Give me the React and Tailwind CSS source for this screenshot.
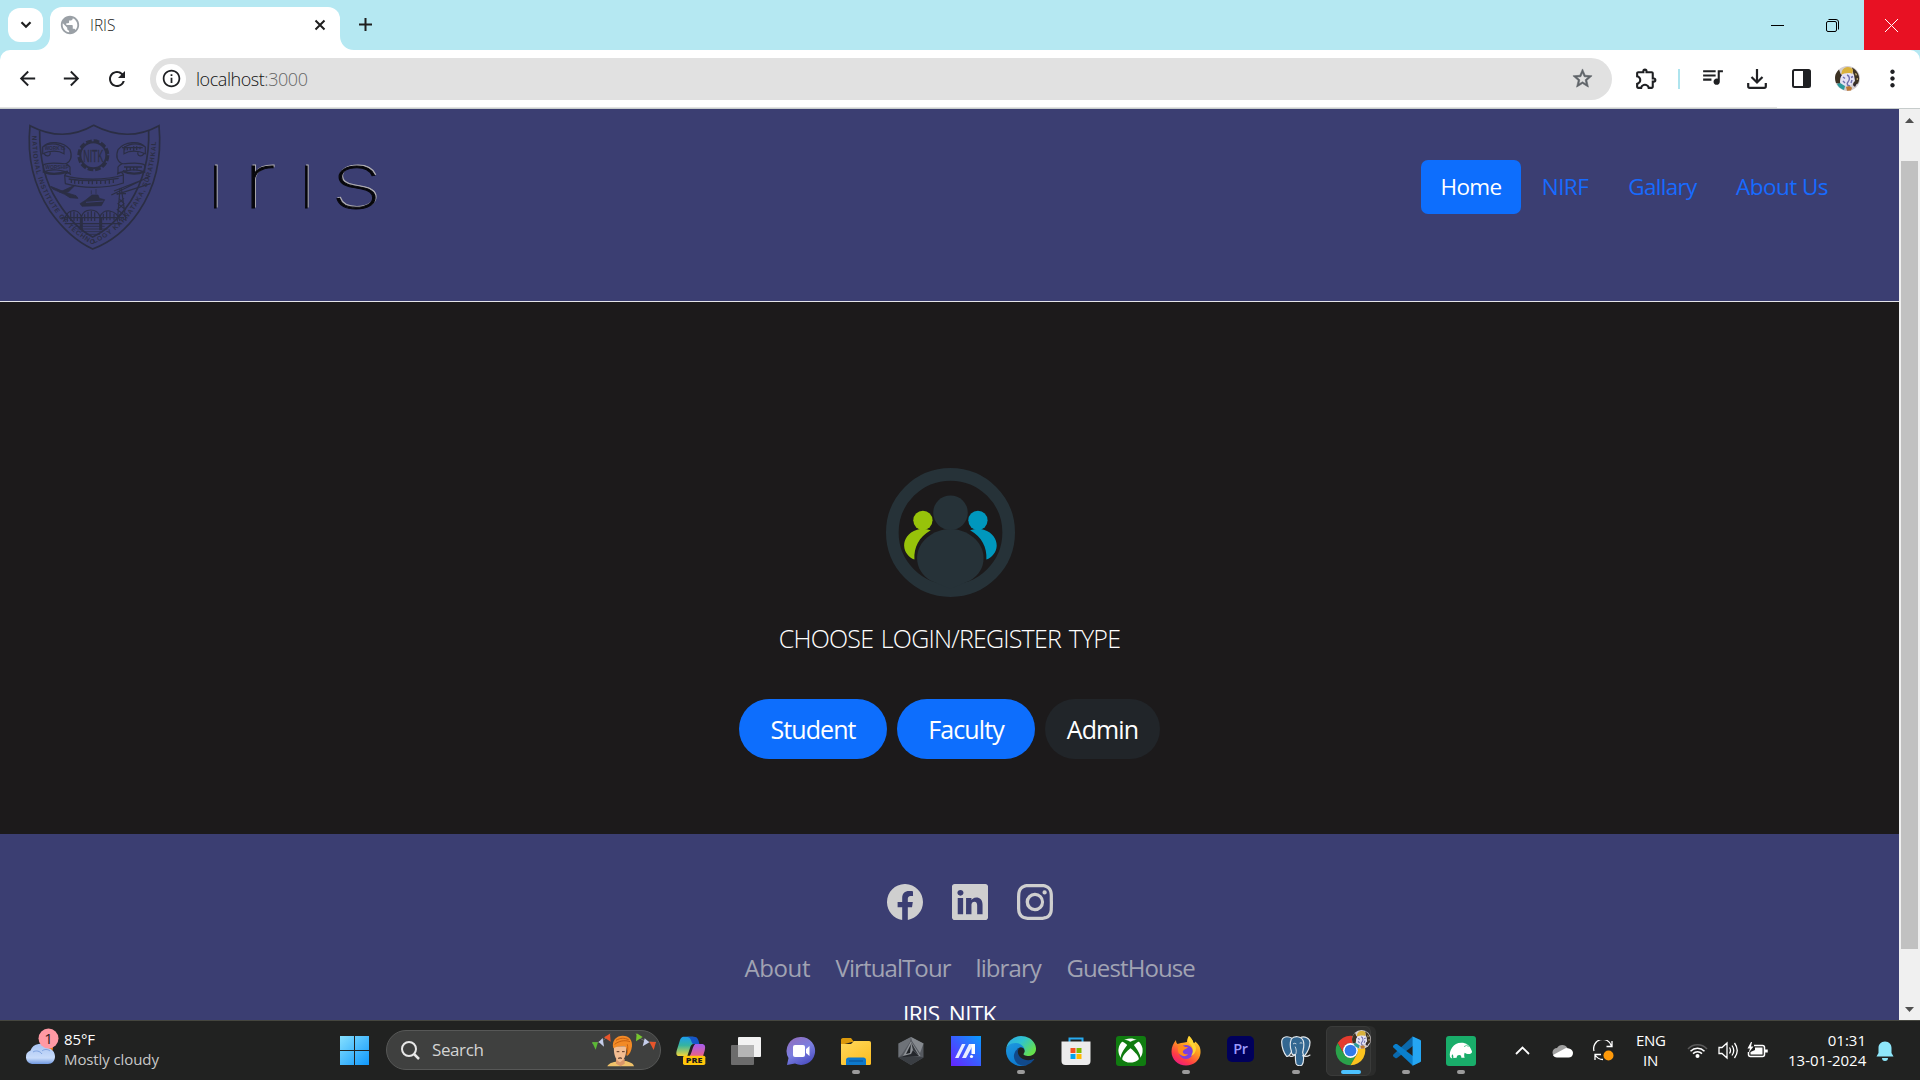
import React from "react";
import {
  MdArrowBack,
  MdArrowForward,
  MdRefresh,
  MdInfoOutline,
  MdStarOutline,
  MdOutlineExtension,
  MdQueueMusic,
  MdMoreVert,
  MdPublic,
} from "react-icons/md";
import { BsFacebook, BsLinkedin, BsInstagram } from "react-icons/bs";
import { FaXbox } from "react-icons/fa";

/* ---------- Browser chrome ---------- */

function TabStrip() {
  return (
    <div className="flex h-[50px] shrink-0 bg-[#b5e8f2] text-[#1f1f1f]">
      <button className="mt-2 ml-2 flex h-[34px] w-[35px] items-center justify-center rounded-xl bg-white">
        <svg width="12" height="8" viewBox="0 0 12 8" fill="none" stroke="currentColor" strokeWidth="2.2">
          <path d="M1.5 1.2 6 5.8l4.500-4.600" />
        </svg>
      </button>
      <div className="relative mt-[7px] ml-[7px] flex h-[43px] w-[290px] items-center rounded-t-xl bg-white">
        <svg className="absolute bottom-0 -left-[14px]" width="14" height="14" viewBox="0 0 14 14">
          <path d="M14 0v14H0C8 14 14 8 14 0z" fill="#fff" />
        </svg>
        <svg className="absolute -right-[14px] bottom-0" width="14" height="14" viewBox="0 0 14 14">
          <path d="M0 0v14h14C6 14 0 8 0 0z" fill="#fff" />
        </svg>
        <MdPublic className="-mt-[7px] ml-[9px] size-[22px] text-[#9aa0a6]" />
        <span className="-mt-[7px] ml-[9px] text-[15.500px] leading-5 font-light">IRIS</span>
        <svg className="-mt-[7px] mr-[14px] ml-auto" width="12" height="12" viewBox="0 0 12 12" stroke="currentColor" strokeWidth="2">
          <path d="m1.500 1.500 9 9M10.500 1.500l-9 9" />
        </svg>
      </div>
      <svg className="mt-[18px] ml-[19px]" width="13" height="13" viewBox="0 0 13 13" stroke="currentColor" strokeWidth="2">
        <path d="M6.500 0v13M0 6.500h13" />
      </svg>
      <div className="ml-auto flex">
        <div className="flex w-[57px] items-center justify-center">
          <svg width="13" height="1" viewBox="0 0 13 1"><path d="M0 0h13v1H0z" fill="#000" /></svg>
        </div>
        <div className="flex w-[58px] items-center pl-[20px]">
          <svg width="13" height="13" viewBox="0 0 13 13" fill="none" stroke="#000">
            <rect x=".5" y="2.500" width="10" height="10" rx="1.500" />
            <path d="M2.500 .5H10A2.500 2.500 0 0 1 12.500 3v7.500" />
          </svg>
        </div>
        <div className="flex w-14 items-center bg-[#e81123] pl-[21px]">
          <svg width="13" height="13" viewBox="0 0 13 13" stroke="#fff"><path d="m0 0 13 13M13 0 0 13" /></svg>
        </div>
      </div>
    </div>
  );
}

function GaneshaAvatar({ className }) {
  return (
    <svg className={className} viewBox="0 0 25 25">
      <circle cx="12.500" cy="12.500" r="12.500" fill="#d3cdd0" />
      <path d="M4 3.500A12.500 12.500 0 0 0 1 17l4 1 1-9zM17 1.500c6 3 9 10 6 16l-5 2 1-9z" fill="#3d3223" />
      <path d="M7 5c2-5 9-5 11-1l-1 5-5 1-6-1z" fill="#d9b13c" />
      <path d="M6 9c3-2 10-3 13 0l1 6-4 4-8 1-3-4z" fill="#e4e2f4" />
      <path d="M12 9c3 1 3 5 1 7s0 4 2 4M8 11l2 1.500M16 11.500l2-1M8 15l2 2M17 14l-1 3" stroke="#6f6fac" strokeWidth="1.400" fill="none" />
      <path d="M2 18c1 3 4 5 7 6l1-4-5-3z" fill="#2c9a9c" />
      <path d="M11 21c2-1 5-1 6 1l-1 2.500-4 .2z" fill="#bd7934" />
      <path d="M18 19l4-2-2 4zM5 8l2 1-2 3z" fill="#2a2230" />
      <path d="M20 7l2 1-1 2zM21 13l2-1v2zM3 10l1 2" fill="#d8c27a" />
    </svg>
  );
}

function Toolbar() {
  return (
    <div className="flex h-[59px] shrink-0 flex-col bg-[#b5e8f2]">
      <div className="flex h-[57px] items-center rounded-t-[10px] bg-white text-[#1f2023]">
        <MdArrowBack className="ml-[16px] size-[23px]" />
        <MdArrowForward className="ml-[21px] size-[23px]" />
        <MdRefresh className="ml-[22px] size-6" />
        <div className="ml-[21px] flex h-[42px] w-[1462px] items-center rounded-full bg-[#e1e1e1]">
          <div className="ml-1.5 flex size-[30px] items-center justify-center rounded-full bg-white">
            <MdInfoOutline className="size-[21px]" />
          </div>
          <span className="ml-[10px] text-[18px] leading-6 font-light tracking-[-0.450px] text-[#111]">
            localhost<span className="text-[#666]">:3000</span>
          </span>
          <MdStarOutline className="mr-[18px] ml-auto size-[23px] stroke-current [stroke-width:0.6] text-[#5f6368]" />
        </div>
        <MdOutlineExtension className="ml-[22px] size-[25px]" />
        <div className="ml-[19px] h-5 w-0.5 bg-[#aee4ee]" />
        <MdQueueMusic className="mt-[-4px] ml-[20px] size-[25px]" />
        <svg className="ml-[22px]" width="20" height="20" viewBox="0 0 20 20" fill="none" stroke="currentColor" strokeWidth="2.200">
          <path d="M10 0v13M4.500 8 10 13.500 15.500 8" />
          <path d="M1.200 14v3.200c0 1 .7 1.600 1.600 1.600h14.400c1 0 1.600-.6 1.600-1.600V14" />
        </svg>
        <svg className="ml-[25px]" width="19" height="19" viewBox="0 0 19 19">
          <rect x="1" y="1" width="17" height="17" rx="1.500" fill="none" stroke="currentColor" strokeWidth="2" />
          <path d="M11 1h7v17h-7z" fill="currentColor" />
        </svg>
        <GaneshaAvatar className="ml-[24px] size-[25px]" />
        <MdMoreVert className="ml-[19px] size-[27px]" />
      </div>
      <div className="h-px w-full bg-white"><div className="h-px w-[1777px] bg-[#e3e3e3]" /></div>
      <div className="h-px w-full bg-[#c6cccb]" />
    </div>
  );
}

/* ---------- Web page ---------- */

function Emblem() {
  return (
    <svg className="mt-1.5 ml-5 h-[145px] w-[150px] overflow-visible" viewBox="0 0 450 435" fill="none" stroke="#2b2e44" strokeWidth="5">
      <path d="M30 32Q130 84 221 31Q322 84 417 32C426 130 408 214 356 290C318 346 270 382 218 402C170 380 128 342 90 288C42 214 20 130 30 32z" />
      <path d="M59 47C58 130 72 196 112 258C144 310 180 346 218 366C262 346 300 306 330 262C372 196 389 130 386 46" />
      <path id="rim" d="M36 62C38 150 54 215 98 280C132 330 172 366 218 388C266 366 310 332 344 282C388 216 408 150 409 56" stroke="none" />
      <text fill="#2b2e44" stroke="none" className="font-['Liberation_Sans'] text-[20px] font-bold">
        <textPath href="#rim" textLength="775" lengthAdjust="spacing">
          NATIONAL INSTITUTE OF TECHNOLOGY KARNATAKA, SURATHKAL
        </textPath>
      </text>
      <circle cx="220" cy="121" r="44" strokeWidth="8" strokeDasharray="17 6" />
      <circle cx="220" cy="121" r="39" strokeWidth="6" />
      <text x="220" y="140" textAnchor="middle" fill="#2b2e44" stroke="#2b2e44" strokeWidth="1" textLength="60" lengthAdjust="spacingAndGlyphs" className="font-['Liberation_Sans'] text-[52px]">
        NITK
      </text>
      <g strokeWidth="3.500">
        <path d="M68 96C84 76 130 78 150 104C158 124 152 140 138 146C124 148 90 138 70 150V172C90 160 130 164 150 176V156C146 150 142 148 138 146M68 96V116C90 106 116 106 132 116V98C112 82 84 84 68 96zM72 116C80 128 94 122 90 112" />
        <path d="M376 96C360 76 314 78 294 104C286 124 292 140 306 146C320 148 354 138 374 150V172C354 160 314 164 294 176V156C298 150 302 148 306 146M376 96V116C354 106 328 106 312 116V98C332 82 360 84 376 96zM372 116C364 128 350 122 354 112" />
        <path d="M134 182C180 196 258 196 310 180V204C256 222 184 220 136 206zM134 182C136 172 150 170 152 180M310 180C308 170 294 170 292 178" />
        <path d="M76 172c20 8 46 4 68-2M308 168c20 10 48 10 62 2" strokeWidth="7" />
      </g>
      <g fill="#2b2e44" stroke="none" className="font-['Liberation_Sans'] text-[16px] font-bold">
        <text x="74" y="106" textLength="62" lengthAdjust="spacingAndGlyphs">WORK IS</text>
        <text x="76" y="162" textLength="70" lengthAdjust="spacingAndGlyphs">WORSHIP</text>
      </g>
      <path d="M306 98h62M314 94v12m8-10v10m9-10v10m10-12v13m9-13v11m10-10v8M312 156h54M320 154v12m11-10v10m10-12v12m10-12v10M146 192q70 10 150-2M154 192v12m10-10v12m12-10v11m11-10v10m19-10v10m11-11v12m13-12v11m12-11v11m14-11v10m12-12v12m12-13v11" strokeWidth="4" />
      <path d="M92 214L142 234L168 242L174 250L150 248L134 238L98 222zM118 232L166 210L144 232" fill="#2b2e44" strokeWidth="2.500" />
      <path d="M180 266L196 256L216 240H234L238 250L254 254L244 272L186 274zM214 238V226M228 238V222" fill="#2b2e44" strokeWidth="2" />
      <path d="M198 262L250 258" stroke="#3b3e72" strokeWidth="3" />
      <path d="M274 240L390 184M282 228L374 192M290 238L392 206M300 220L292 320M304 220L318 318M290 236H318M296 250l16 16-20 18 26 20M312 250l-18 16 22 18-24 22" strokeWidth="3.500" />
      <path d="M132 318C140 278 176 280 184 306C192 278 232 278 240 306C248 278 290 282 300 318M134 326H302M124 308H312M142 320V294m10 24v-28m10 28v-28m10 28v-22m22 22v-20m10 20v-28m10 28v-30m10 30v-26m26 24v-20m10 20v-26m10 26v-26m12 26v-20" strokeWidth="3.500" />
      <path d="M184 308V346M242 308V346" strokeWidth="9" />
      <path d="M164 334h90M172 342h90M182 350h66M196 358h44" strokeWidth="2.500" />
    </svg>
  );
}

function IrisWordmark() {
  const letters = (
    <>
      <text x="0" y="53" className="text-[77px]">ı</text>
      <text x="35" y="53" className="text-[77px]" textLength="34" lengthAdjust="spacingAndGlyphs">r</text>
      <text x="91" y="53" className="text-[77px]">ı</text>
      <text x="123" y="53" className="text-[77px]" textLength="52" lengthAdjust="spacingAndGlyphs">s</text>
    </>
  );
  return (
    <svg className="mt-[46px] ml-[37px] h-[70px] w-[180px] overflow-visible font-['Inter'] font-thin" viewBox="0 0 180 70">
      <g fill="#b0aeb4" stroke="#b0aeb4" strokeWidth=".8" transform="translate(0.900 -0.800)">{letters}</g>
      <g fill="#07070c" stroke="#07070c" strokeWidth=".9">{letters}</g>
    </svg>
  );
}

function Header() {
  return (
    <header className="flex h-[193px] shrink-0 border-b border-[#e4e4ea] bg-[#3b3e72]">
      <Emblem />
      <IrisWordmark />
      <nav className="mt-[51px] mr-[51px] ml-auto flex h-[54px] text-center text-[22.5px] leading-[54px] text-[#176bff]">
        <a className="w-[100px] rounded-[7px] bg-[#0d6efd] font-[450] tracking-[-0.700px] text-white">Home</a>
        <a className="w-[88px] tracking-[-0.6px]">NIRF</a>
        <a className="w-[107px] tracking-[-0.7px]">Gallary</a>
        <a className="w-[132px] tracking-[-0.550px]">About Us</a>
      </nav>
    </header>
  );
}

function PeopleIcon() {
  const side = "M631 269Q610 261 590 267C562 276 551 296 551 315C552 335 565 350 582 357C580 320 595 290 631 269z";
  return (
    <svg className="ml-[2px] size-[129px]" viewBox="496.500 81.500 388 388">
      <circle cx="690.500" cy="275.500" r="175" fill="none" stroke="#263238" strokeWidth="38" />
      <circle cx="690.500" cy="216" r="52" fill="#263238" />
      <path d="M690 265C640 265 590 302 590 352C590 382 606 404 630 420L690 445L750 420C776 402 790 382 790 352C790 302 740 265 690 265z" fill="#263238" />
      <circle cx="607.500" cy="239" r="29" fill="#97c30a" />
      <path d={side} fill="#97c30a" />
      <circle cx="773" cy="239" r="29" fill="#0097bd" />
      <path d={side} transform="matrix(-1 0 0 1 1380.500 0)" fill="#0097bd" />
    </svg>
  );
}

function LoginChooser() {
  return (
    <main className="flex h-[532px] shrink-0 flex-col items-center bg-[#1c1a1b] pt-[166px]">
      <PeopleIcon />
      <h1 className="mt-[24px] text-[25px] leading-[34px] font-light tracking-[-0.800px] [word-spacing:2px] whitespace-nowrap text-white">
        CHOOSE LOGIN/REGISTER TYPE
      </h1>
      <div className="mt-[44px] flex gap-[10px] text-center text-[25px] leading-[61px] font-[450] tracking-[-0.9px] text-white">
        <button className="h-[60px] w-[148px] rounded-full bg-[#0d6efd]">Student</button>
        <button className="h-[60px] w-[138px] rounded-full bg-[#0d6efd]">Faculty</button>
        <button className="h-[60px] w-[115px] rounded-full bg-[#212529]">Admin</button>
      </div>
    </main>
  );
}

function Footer() {
  return (
    <footer className="flex min-h-0 flex-1 flex-col items-center overflow-hidden bg-[#3b3e72] pt-[50px]">
      <div className="ml-[41px] flex gap-[29px] text-[#cfcfcf]">
        <BsFacebook className="size-9" />
        <BsLinkedin className="size-9" />
        <BsInstagram className="size-9" />
      </div>
      <div className="mt-[31px] ml-[40px] flex gap-[25px] text-[24px] leading-[34px] font-[450] tracking-[-0.9px] whitespace-nowrap text-[#a1a3b3]">
        <a className="w-[66px] tracking-[-0.400px]">About</a>
        <a className="w-[115px]">VirtualTour</a>
        <a className="w-[66px]">library</a>
        <a className="w-[128px]">GuestHouse</a>
      </div>
      <p className="mt-[12px] text-[22.500px] leading-[34px] font-[450] tracking-[-0.550px] text-white">IRIS_NITK</p>
    </footer>
  );
}

function Scrollbar() {
  return (
    <div className="flex w-[21px] flex-col items-center bg-[#f0f0f0]">
      <svg className="mt-[9px]" width="9" height="5" viewBox="0 0 9 5"><path d="M4.500 0 9 5H0z" fill="#505050" /></svg>
      <div className="mt-[38px] mr-[1px] h-[788px] w-[17px] bg-[#c1c1c1]" />
      <svg className="mt-auto mb-[8px]" width="9" height="5" viewBox="0 0 9 5"><path d="M0 0h9L4.500 5z" fill="#505050" /></svg>
    </div>
  );
}

/* ---------- Taskbar ---------- */

const Copilot = () => (
  <svg className="size-[30px]" viewBox="0 0 90 90">
    <defs>
      <linearGradient id="cpA" x1="0" y1="0" x2="0" y2="1"><stop stopColor="#1c9df0" /><stop offset=".45" stopColor="#35b4a0" /><stop offset="1" stopColor="#f2d63a" /></linearGradient>
      <linearGradient id="cpB" x1="0" y1="0" x2="0" y2="1"><stop stopColor="#a45cf0" /><stop offset="1" stopColor="#f2627b" /></linearGradient>
    </defs>
    <path d="M22 2H50C60 4 62 14 60 24H54C46 24 44 30 42 36L34 60H10C0 60 0 52 2 44L12 12C14 6 18 2 22 2z" fill="url(#cpA)" />
    <path d="M34 2h20c11 0 14 10 16 22H52C44 20 48 6 34 2z" fill="#1656c8" />
    <path d="M58 24H76C88 24 89 32 86 44L80 64H36C48 60 48 30 58 24z" fill="url(#cpB)" />
    <rect x="21" y="59" width="67" height="28" rx="5" fill="#ffc60a" />
    <text x="54.500" y="81" textAnchor="middle" fill="#1b1b1b" textLength="50" lengthAdjust="spacingAndGlyphs" className="font-['Open_Sans'] text-[22px] font-extrabold">PRE</text>
  </svg>
);

const TaskView = () => (
  <svg className="size-[30px]" viewBox="0 0 30 30">
    <rect x="7" y="1" width="23" height="20" rx="1" fill="#f2f2f2" />
    <rect y="9" width="23" height="20" rx="1" fill="#6c6c6c" />
    <path d="M7 9h16v12H7z" fill="#b5b5b5" />
  </svg>
);

const Chat = () => (
  <svg className="size-[30px]" viewBox="0 0 30 30">
    <defs><linearGradient id="chat" x1=".1" y1=".1" x2=".6" y2="1"><stop stopColor="#8f6fc0" /><stop offset=".5" stopColor="#7b7fe0" /><stop offset="1" stopColor="#4f52c4" /></linearGradient></defs>
    <path d="M15 1a14 14 0 1 1-6 26.600L1 29l1.500-7A14 14 0 0 1 15 1z" fill="url(#chat)" />
    <rect x="7" y="9" width="12" height="12" rx="2" fill="#fff" />
    <path d="m20 13 3.500-3v10L20 17z" fill="#fff" />
  </svg>
);

const Explorer = () => (
  <svg className="size-[30px]" viewBox="0 0 30 30">
    <defs><linearGradient id="fold" x1="0" y1="0" x2=".7" y2="1"><stop stopColor="#ffd95c" /><stop offset="1" stopColor="#fcbf26" /></linearGradient></defs>
    <path d="M0 4c0-1 .5-2 2-2h8l3 4h-2L0 9z" fill="#dc9a0c" />
    <path d="M0 8h10l3-3h15c1.500 0 2 .7 2 2v20.500c0 .8-.5 1.500-1.500 1.500h-27C.5 29 0 28.500 0 27.500z" fill="url(#fold)" />
    <path d="M5 29v-5c0-1.500 1-2.500 2.500-2.500h15c1.500 0 2.500 1 2.500 2.500v5z" fill="#0d79cc" />
    <path d="M8 25h14" stroke="#0a4f90" />
  </svg>
);

const Armoury = () => (
  <svg className="size-[30px]" viewBox="0 0 30 30">
    <path d="m15 1 12.500 6.500v14L15 29 2.500 21.500v-14z" fill="#565a60" />
    <path d="m15 1 12.500 6.500L24 17 16 5z" fill="#85898e" />
    <path d="M2.500 7.500 15 1l-1 5-8 12-3.500 3.500z" fill="#6e7278" />
    <path d="M2.500 21.500 7 20l17 1 3.500.5L15 29z" fill="#3a3e43" />
    <path d="m15 5 9 15-17 1z" fill="#24272c" />
    <path d="M15 5 7 20l8-2 2-4 6 6h1.500z" fill="#8d9196" />
    <path d="m15 8-5 10 4-1z" fill="#1f2226" />
    <path d="m15 6 2 8 6 6z" fill="#33373c" />
  </svg>
);

const MyAsus = () => (
  <svg className="size-[30px]" viewBox="0 0 30 30">
    <defs><linearGradient id="asus" x1="0" y1="1" x2="1" y2="0"><stop stopColor="#6524ff" /><stop offset=".5" stopColor="#3a5cff" /><stop offset="1" stopColor="#089dff" /></linearGradient></defs>
    <path d="M0 0h30v30H0z" fill="url(#asus)" />
    <path d="M4 22 11 8h3.500L7.500 22zM11 22l7-14h3.500v2L15 22z" fill="#e7ecff" />
    <path d="M20.500 8H24v10h-3.500z" fill="#fff" />
    <circle cx="20.500" cy="20.500" r="1.600" fill="#fff" />
  </svg>
);

const Edge = () => (
  <svg className="size-[30px]" viewBox="0 0 256 256">
    <defs>
      <linearGradient id="edA" x1="0" y1="0" x2="1" y2=".6"><stop stopColor="#2ea6e8" /><stop offset=".5" stopColor="#2fc3d0" /><stop offset="1" stopColor="#66e04c" /></linearGradient>
      <linearGradient id="edB" x1="0" y1="0" x2=".5" y2="1"><stop stopColor="#1f9ae0" /><stop offset="1" stopColor="#0c7ad0" /></linearGradient>
    </defs>
    <path d="M235.680 195.530a93.730 93.730 0 0 1-10.540 4.710 101.870 101.870 0 0 1-35.900 6.460c-47.320 0-88.540-32.550-88.540-74.320A31.480 31.480 0 0 1 117.130 105c-42.800 1.800-53.800 46.400-53.800 72.530 0 73.880 68.090 78 82.760 78 7.910 0 19.840-2.300 27-4.560l1.310-.44a128.340 128.340 0 0 0 66.600-49.800 4 4 0 0 0-5.320-5.200z" fill="#114a8b" />
    <path d="M105.730 241.420A79.200 79.200 0 0 1 83 220.080a80.720 80.720 0 0 1 29.500-120c3.120-1.470 8.450-4.130 15.540-4a32.350 32.350 0 0 1 25.690 13 31.880 31.880 0 0 1 6.360 18.660c0-.21 24.460-79.600-80-79.600-43.900 0-80 41.660-80 78.210a130.150 130.150 0 0 0 12.110 56 128 128 0 0 0 156.380 67.110 75.550 75.550 0 0 1-62.780-8z" fill="url(#edB)" />
    <path d="M152.330 148.860c-.81 1.050-3.300 2.500-3.300 5.660 0 2.610 1.700 5.120 4.720 7.230 14.380 10 41.490 8.680 41.560 8.680a59.560 59.560 0 0 0 30.270-8.350 61.380 61.380 0 0 0 30.430-52.880c.26-22.410-8-37.310-11.340-43.910C223.460 23.840 177.720 0 128 0A128 128 0 0 0 0 126.200c.48-36.540 36.800-66.050 80-66.050 3.500 0 23.460.34 42 10.070 16.340 8.580 24.900 18.940 30.850 29.210 6.180 10.670 7.280 24.150 7.280 29.520s-2.740 13.330-7.800 19.910z" fill="url(#edA)" />
  </svg>
);

const Store = () => (
  <svg className="size-[30px]" viewBox="0 0 30 30">
    <path d="M8.500 6V2.500h13V6" fill="none" stroke="#27aaf0" strokeWidth="2" />
    <path d="M.5 5.500h29V25a4 4 0 0 1-4 4h-21a4 4 0 0 1-4-4z" fill="#ececec" />
    <path d="M9.500 12h5v5h-5z" fill="#f25022" /><path d="M15.500 12h5v5h-5z" fill="#7fba00" />
    <path d="M9.500 18h5v5h-5z" fill="#00a4ef" /><path d="M15.500 18h5v5h-5z" fill="#ffb900" />
  </svg>
);

const Xbox = () => (
  <div className="flex size-[30px] items-center justify-center rounded-[3px] bg-[#107c10]">
    <FaXbox className="size-[25px] text-white" />
  </div>
);

const Firefox = () => (
  <svg className="size-[30px]" viewBox="0 0 30 30">
    <defs>
      <linearGradient id="ffA" x1=".8" y1="0" x2=".2" y2="1"><stop stopColor="#ffe13a" /><stop offset=".4" stopColor="#ff9a1f" /><stop offset=".75" stopColor="#ff3b47" /><stop offset="1" stopColor="#e8158a" /></linearGradient>
    </defs>
    <path d="M18 0c2 2 4 4 4.500 7 1 0 1.500-.5 1.500-1.500C28 8 30 12 29.500 17 29 24 23 29.500 15 29.500S.5 23.500.5 15.500C.5 11 2.500 7 5 4c0 2 .5 3 1.500 4L10 7c3 0 4-1 6-1 0-2 .5-4 2-6z" fill="url(#ffA)" />
    <circle cx="15" cy="16" r="7" fill="#7a3fe0" />
    <path d="M7 11c2-2 5-2 7 0h3c-1 2-4 2-5 4s2 4 5 3c-2 4-9 2-10-3z" fill="#ff8a1c" />
    <path d="M18 0c-2 3-1 6 2 9 3 4 2 8 0 11 5-2 7-9 2.500-13C22 4 20 2 18 0z" fill="#ffd534" />
  </svg>
);

const Premiere = () => (
  <div className="mb-[3px] flex h-[26px] w-[27px] items-center justify-center rounded-[5px] bg-[#00005b] text-[14.500px] leading-none font-semibold tracking-[-0.3px] text-[#9a9aff]">
    Pr
  </div>
);

const Postgres = () => (
  <svg className="size-[30px]" viewBox="303 59 90 90" fill="#336791" stroke="#e4e9ed" strokeWidth="3.500" strokeLinejoin="round" strokeLinecap="round">
    <path d="M336 66C322 58 306 60 305 76C305 92 312 112 320 120C326 122 332 112 336 104z" />
    <path d="M360 64C374 58 390 66 390 78C390 92 382 108 374 118L362 112z" />
    <path d="M334 68C342 58 364 58 370 74C374 88 370 98 368 108C372 118 372 138 366 146C360 150 350 148 348 142C346 134 346 124 346 116C338 118 334 112 334 104C330 92 330 78 334 68z" />
    <path d="M368 118C376 122 384 120 390 116" fill="none" />
    <path d="M328 118C336 122 342 120 345 114" fill="none" />
    <path d="M340 82q4-3 8 0M360 80q3-2 6 0M346 116C350 110 350 100 346 92" fill="none" strokeWidth="2.500" />
  </svg>
);

const Chrome = () => (
  <div className="relative flex h-[50px] w-[50px] items-center justify-start rounded-md bg-[#2b2c2b]">
    <div className="flex h-[50px] w-[45px] items-center justify-center rounded-md border border-[#3a3b3a] bg-[#303130] pl-1">
      <svg className="size-[31px]" viewBox="1 1 46 46">
        <path d="M4.950 13A22 22 0 0 1 43.050 13H24A11 11 0 0 0 14.470 29.500z" fill="#e33b2e" />
        <path d="M4.950 13A22 22 0 0 0 24 46L33.530 29.500A11 11 0 0 1 14.470 29.500z" fill="#2aa14a" />
        <path d="M43.050 13A22 22 0 0 1 24 46L33.530 29.500A11 11 0 0 0 24 13z" fill="#fcc31e" />
        <circle cx="24" cy="24" r="11" fill="#fff" />
        <circle cx="24" cy="24" r="8.700" fill="#3179ea" />
      </svg>
    </div>
    <GaneshaAvatar className="absolute top-[4px] left-[26px] size-[19px]" />
  </div>
);

const VsCode = () => (
  <svg className="size-[30px]" viewBox="0 0 100 100">
    <path d="M72 2 8 62c-2 2-2 4 0 6l6 5c2 1 4 1 6 0L98 14z" fill="#0b69ac" />
    <path d="M72 98 8 38c-2-2-2-4 0-6l6-5c2-1 4-1 6 0l78 59z" fill="#0a7fcc" />
    <path d="M72 2 98 13c1 1 2 2 2 4v66c0 2-1 3-2 4L72 99z" fill="#25a6f2" />
  </svg>
);

const Chameleon = () => (
  <svg className="size-[30px]" viewBox="0 0 90 90">
    <rect width="90" height="90" rx="9" fill="#19ad6a" />
    <path d="M12 62C8 44 22 20 46 20c14 0 26 8 30 22 4 6 2 10-4 12-8 1-12-2-16-4-2 5-2 10 0 15H46c0-6-2-8-6-8-6 0-8 4-8 8l-10 1c0-5 0-8-3-11-2 3-3 8 0 12-4-1-6-2-7-5z" fill="#fff" />
    <path d="M54 32q8-8 14 0" stroke="#19ad6a" strokeWidth="2" fill="none" />
  </svg>
);

const APPS = [
  { name: "copilot", Icon: Copilot },
  { name: "taskview", Icon: TaskView },
  { name: "chat", Icon: Chat },
  { name: "explorer", Icon: Explorer, open: true },
  { name: "armoury", Icon: Armoury },
  { name: "myasus", Icon: MyAsus },
  { name: "edge", Icon: Edge, open: true },
  { name: "store", Icon: Store },
  { name: "xbox", Icon: Xbox },
  { name: "firefox", Icon: Firefox, open: true },
  { name: "premiere", Icon: Premiere },
  { name: "postgres", Icon: Postgres, open: true },
  { name: "chrome", Icon: Chrome, active: true },
  { name: "vscode", Icon: VsCode, open: true },
  { name: "chameleon", Icon: Chameleon, open: true },
];

function Weather() {
  return (
    <div className="flex w-[340px]">
      <svg className="mt-[6px] ml-6 h-[39px] w-[36px]" viewBox="0 0 36 39">
        <defs><linearGradient id="cloud" x1="0" y1="0" x2="0" y2="1"><stop stopColor="#a8c4f4" /><stop offset=".7" stopColor="#c9dcfa" /><stop offset="1" stopColor="#6f98e0" /></linearGradient></defs>
        <circle cx="22" cy="21" r="7" fill="#ef7a1a" />
        <path d="M8 37a7 7 0 0 1-1.500-13.500A10 10 0 0 1 24 21c4 1 7 4 7 8.500s-3 7.500-7 7.500z" fill="url(#cloud)" />
        <path d="M9 25c3-2 7-1 9 2M18 24c2-2 6-2 8 0" stroke="#7fa3e0" fill="none" />
        <circle cx="24.500" cy="11.500" r="10" fill="#ff99a4" />
        <text x="24.500" y="17" textAnchor="middle" fill="#2a1a1c" className="text-[15px]">1</text>
      </svg>
      <div className="mt-[8px] ml-1 text-[15px] leading-5 tracking-[-0.100px] text-white">
        <p>85°F</p>
        <p className="text-[#c8c8c8]">Mostly cloudy</p>
      </div>
    </div>
  );
}

function WindowsLogo() {
  return (
    <svg className="mt-[15px] h-[30px] w-[30px]" viewBox="0 0 30 30">
      <defs><linearGradient id="win" gradientUnits="userSpaceOnUse" x1="0" y1="0" x2="30" y2="30"><stop stopColor="#86e0ff" /><stop offset="1" stopColor="#0b95fb" /></linearGradient></defs>
      <path d="M0 0h14v14H0zM15 0h14v14H15zM0 15h14v14H0zM15 15h14v14H15z" fill="url(#win)" />
    </svg>
  );
}

function SearchBox() {
  return (
    <div className="mt-[9px] ml-4 flex h-[40px] w-[275px] items-center rounded-full border border-[#575857] bg-[#3f403f]">
      <svg className="ml-[14px]" width="19" height="19" viewBox="0 0 19 19" fill="none" stroke="#e8e8e8" strokeWidth="2">
        <circle cx="8" cy="8" r="7" /><path d="m13 13 5 5" strokeWidth="2.500" />
      </svg>
      <span className="ml-3 text-[17px] leading-6 tracking-[-0.4px] text-[#d4d4d4]">Search</span>
      <svg className="mr-1 ml-auto h-[34px] w-[64px]" viewBox="636 56 192 102">
        <path d="M690 58C676 78 660 84 637 88M768 58C780 76 800 86 828 84" stroke="#8a8a8a" strokeWidth="2" fill="none" />
        <path d="m690 58 2 24-20-13z" fill="#e8552b" /><path d="m668 71 4 26-16-14z" fill="#c5cdea" /><path d="m636 83 18 1-7 22z" fill="#5cb836" />
        <path d="m770 57-2 24 20-13z" fill="#76c62e" /><path d="m794 72-6 24 20-12z" fill="#c5cdea" /><path d="m808 82 20 1-7 24z" fill="#e8552b" />
        <path d="M682 156c4-10 16-12 24-14l32-2c12 4 22 6 24 16z" fill="#f0c26a" />
        <path d="M708 134h26v14l-12 8-14-8z" fill="#d9976a" />
        <path d="M702 96h36c2 22-2 40-18 48-14-6-20-26-18-48z" fill="#f3bd92" />
        <path d="M710 112h8m8 0h8M714 132q7-3 12 0" stroke="#5b3522" strokeWidth="3" />
        <path d="M700 102c-6-24 10-38 28-38 20 0 30 14 28 32-2 14-6 24-16 30 2-14 0-22-4-30-12-2-24 0-36 6z" fill="#f28a26" />
        <path d="M704 90c12-10 30-14 46-8M708 78c14-8 24-8 38-2M740 122c4-14 4-22 2-32" stroke="#c55f10" strokeWidth="3" fill="none" />
      </svg>
    </div>
  );
}

function Tray() {
  return (
    <div className="ml-auto flex h-[59px] items-center text-white">
      <svg className="mr-[22px]" width="15" height="9" viewBox="0 0 15 9" fill="none" stroke="currentColor" strokeWidth="1.800"><path d="M1 8l6.500-6.500L14 8" /></svg>
      <svg className="mr-[20px]" width="21" height="14" viewBox="0 0 21 14">
        <path d="M5 13a4.500 4.500 0 0 1 0-9A6 6 0 0 1 15.500 4L10 9z" fill="#a0a0a0" />
        <path d="M1 11 12 5a5 5 0 0 1 5-.5c3 .5 4 3 4 4.500 0 3-2 4.500-4.500 4.500H5c-2 0-3.500-1-4-2.500z" fill="#fff" />
      </svg>
      <svg className="mr-[22px]" width="21" height="21" viewBox="0 0 21 21" fill="none" stroke="#fff" strokeWidth="1.300">
        <path d="M1 11A9 9 0 0 1 18.500 6M19 1v5.500h-5.500M2 20v-5.500h6M2 15q3 4.500 8 4.500" />
        <circle cx="15.500" cy="15.500" r="5" fill="#ff9a0a" stroke="none" />
      </svg>
      <div className="mr-[22px] mb-[2px] w-[29px] text-center text-[15px] leading-5 tracking-[-0.3px]">
        <p>ENG</p>
        <p>IN</p>
      </div>
      <svg className="mr-[10px]" width="21" height="17" viewBox="0 0 21 17" fill="none" strokeWidth="1.500">
        <path d="M1 7a13 13 0 0 1 19 0" stroke="#5a5a5a" />
        <path d="M3.500 9.200a10 10 0 0 1 14 0M6 11.600a6.500 6.500 0 0 1 9 0" stroke="#fff" />
        <circle cx="10.500" cy="14" r="2" fill="#fff" />
      </svg>
      <svg className="mr-[8px]" width="21" height="19" viewBox="0 0 21 19" fill="none" stroke="#fff" strokeWidth="1.300">
        <path d="M1 6.500h3l5-4.500v15l-5-4.500H1zM11.500 6.500q2 3 0 6M14 4.500q3.500 5 0 10M16.500 2q5.500 7.500 0 15" />
      </svg>
      <svg className="mr-[20px]" width="21" height="17" viewBox="0 0 21 17" fill="none" stroke="#fff" strokeWidth="1.500">
        <path d="M7 3.500h8.500a2 2 0 0 1 2 2v7a2 2 0 0 1-2 2h-12a2 2 0 0 1-2-2V10M18.500 7.500v3M20 7.500v3" />
        <path d="M8 5.500h7.500v7h-12V10L8 8z" fill="#fff" stroke="none" />
        <path d="M4 0 .5 6.500H3L1.500 11 6.500 4.500H4L5 0z" fill="#fff" stroke="none" />
      </svg>
      <div className="mb-[2px] w-[78px] text-right text-[15px] leading-5 whitespace-nowrap">
        <p>01:31</p>
        <p>13-01-2024</p>
      </div>
      <svg className="mr-[26px] ml-[10px]" width="18" height="20" viewBox="0 0 18 20">
        <path d="M9 .5c4.200 0 6.500 3 6.500 6.500v5l2 3.500H.5L2.500 12V7C2.500 3.500 4.800.5 9 .5zM6 17h6a3 3 0 0 1-6 0z" fill="#8ee7fb" />
      </svg>
    </div>
  );
}

function Taskbar() {
  return (
    <div className="flex h-[60px] shrink-0 overflow-hidden border-t border-[#45463f] bg-[#212221]">
      <Weather />
      <WindowsLogo />
      <SearchBox />
      <div className="ml-[2px] flex">
        {APPS.map(({ name, Icon, open, active }) => (
          <div key={name} className="flex h-[59px] w-[55px] flex-col items-center">
            <div className="flex h-[59px] w-[55px] shrink-0 items-center justify-center">
              <Icon />
            </div>
            {open && <div className="relative -mt-[10px] h-[4px] w-2 rounded-full bg-[#9b9b9b]" />}
            {active && <div className="relative -mt-[10px] h-[4px] w-5 rounded-full bg-[#4cc2ff]" />}
          </div>
        ))}
      </div>
      <Tray />
    </div>
  );
}

export default function App() {
  return (
    <div className="flex h-[1080px] w-[1920px] flex-col overflow-hidden font-['Open_Sans','Noto_Sans',sans-serif]">
      <TabStrip />
      <Toolbar />
      <div className="flex min-h-0 flex-1">
        <div className="flex w-[1899px] flex-col">
          <Header />
          <LoginChooser />
          <Footer />
        </div>
        <Scrollbar />
      </div>
      <Taskbar />
    </div>
  );
}
